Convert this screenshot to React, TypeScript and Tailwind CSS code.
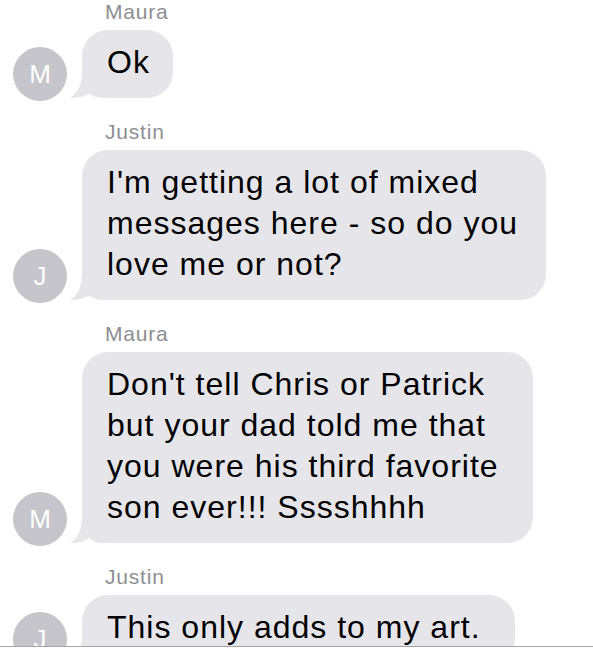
import React from "react";

type Msg = {
  name: string;
  initial: string;
  width: string;
  lines: string[];
};

const messages: Msg[] = [
  { name: "Maura", initial: "M", width: "w-[91px]", lines: ["Ok"] },
  {
    name: "Justin",
    initial: "J",
    width: "w-[464px]",
    lines: ["I'm getting a lot of mixed", "messages here - so do you", "love me or not?"],
  },
  {
    name: "Maura",
    initial: "M",
    width: "w-[451px]",
    lines: [
      "Don't tell Chris or Patrick",
      "but your dad told me that",
      "you were his third favorite",
      "son ever!!! Sssshhhh",
    ],
  },
  { name: "Justin", initial: "J", width: "w-[433px]", lines: ["This only adds to my art."] },
];

function Tail() {
  return (
    <svg
      className="absolute left-[-12px] bottom-0"
      width="34"
      height="26"
      viewBox="0 0 34 26"
    >
      <path
        d="M12 0 C12 12 8 21 0 26 C8 26 14 24.5 19 21.5 C23 24.5 28 26 34 26 L34 0 Z"
        fill="#e5e5ea"
      />
    </svg>
  );
}

function Group({ msg }: { msg: Msg }) {
  return (
    <div className="flex flex-col">
      <p className="pl-[92px] text-[21px] leading-[24px] tracking-[0.8px] text-[#8e8e93] mb-[6px]">
        {msg.name}
      </p>
      <div className="flex items-end">
        <div className="w-[54px] h-[54px] shrink-0 rounded-full bg-[#c5c5cb] mb-[-3px] flex items-center justify-center text-white text-[26px]">
          {msg.initial}
        </div>
        <div
          className={`relative ml-[15px] ${msg.width} bg-[#e5e5ea] rounded-[26px] pl-[25px] pt-[12px] pb-[15px] text-[32px] leading-[41px] tracking-[1px] text-black whitespace-nowrap`}
        >
          <Tail />
          <div className="relative">
            {msg.lines.map((l, i) => (
              <div key={i}>{l}</div>
            ))}
          </div>
        </div>
      </div>
    </div>
  );
}

export default function App() {
  return (
    <div
      className="w-[593px] h-[649px] bg-white overflow-hidden"
      style={{ fontFamily: '"Liberation Sans", Arial, sans-serif' }}
    >
      <div className="h-[646px] overflow-hidden pl-[13px] flex flex-col gap-[22px]">
        {messages.map((m, i) => (
          <Group key={i} msg={m} />
        ))}
      </div>
      <div className="h-px bg-[#a4a4a4]" />
    </div>
  );
}
